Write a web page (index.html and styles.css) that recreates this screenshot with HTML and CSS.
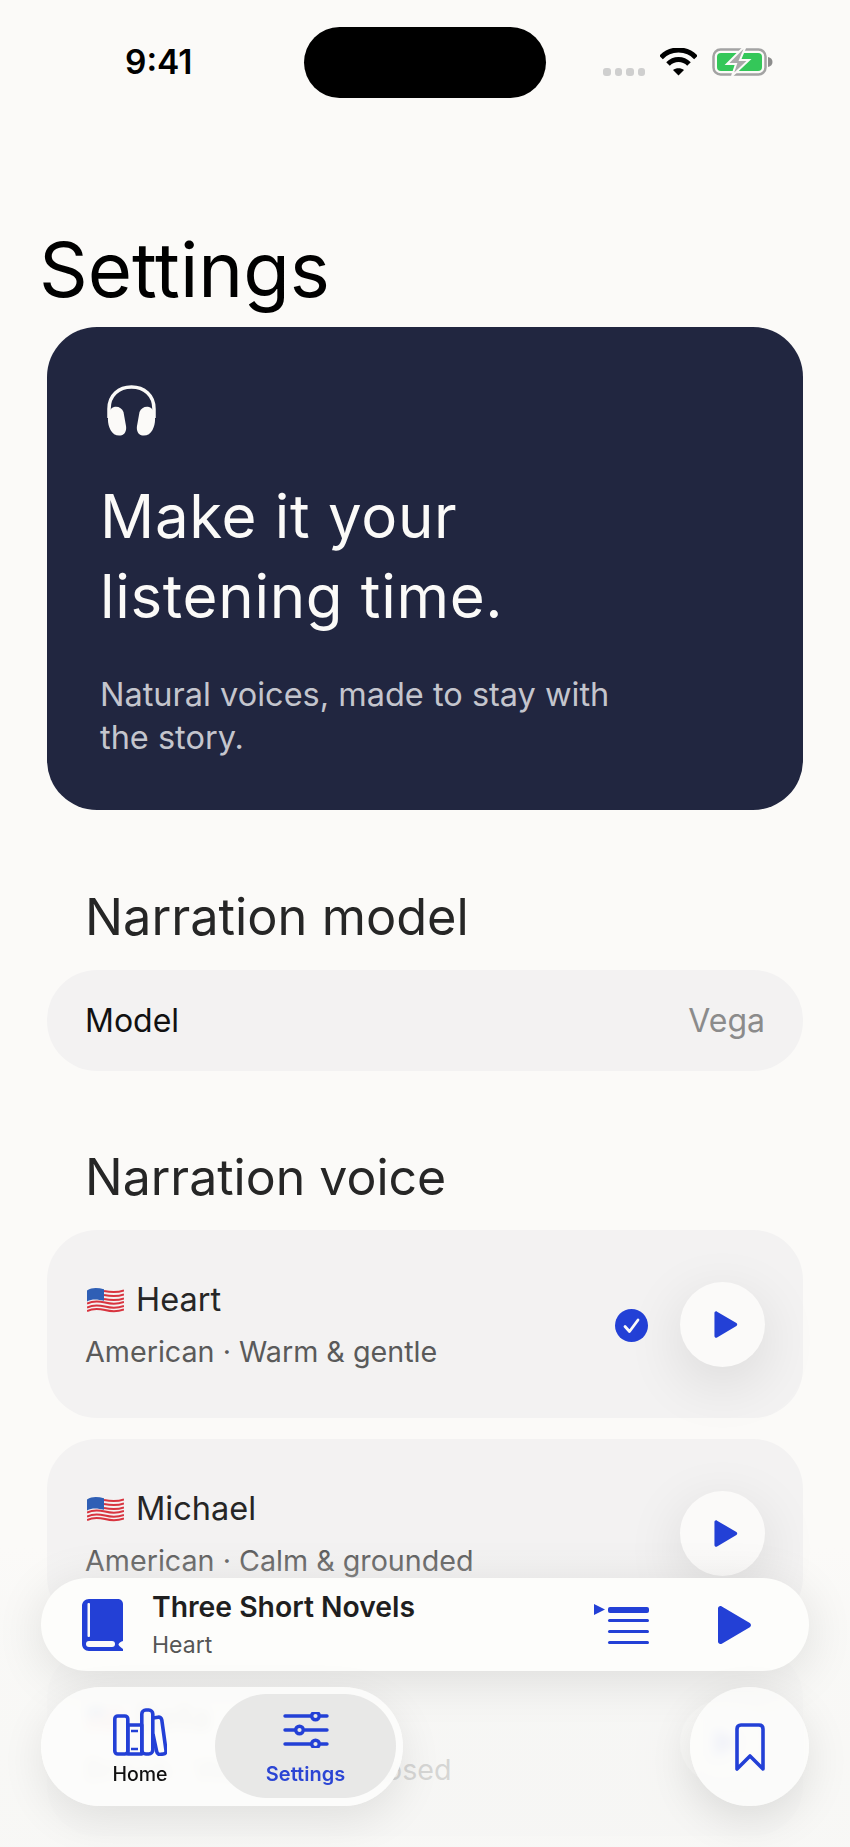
FILE: index.html
```html
<!DOCTYPE html>
<html lang="en">
<head>
<meta charset="utf-8">
<title>Settings</title>
<link rel="stylesheet" href="styles.css">
</head>
<body>
<svg class="defs" width="0" height="0" aria-hidden="true">
  <symbol id="flag" viewBox="0 0 37 26">
    <path d="M0 3.5C6-.5 12 1 18 2.5s13 1.500 19-.5v21c-6 2-13 2-19 .5S6 21 0 24.500z" fill="#f4f1f1"/>
    <g fill="none" stroke="#d8343f" stroke-width="2">
      <path d="M17 4c7 1.500 14 1.500 20-.5"/>
      <path d="M17 8c7 1.500 14 1.500 20-.5"/>
      <path d="M17 12c7 1.500 14 1.500 20-.5"/>
      <path d="M0 16.500c6-3 12-2.500 18-1s13 1.500 19-.5"/>
      <path d="M0 20.500c6-3 12-2.500 18-1s13 1.500 19-.5"/>
      <path d="M0 24c6-3 12-2.500 18-1s13 1.500 19-.5"/>
    </g>
    <path d="M0 3.500C5.500 0 11 .8 17 2.300v11.500C11 12.500 5.500 11.500 0 14.500z" fill="#2f5fb5"/>
  </symbol>
  <symbol id="play" viewBox="0 0 36 42">
    <path d="M2 4.500v33c0 2 2 3.200 3.800 2.200l28-16.500c1.600-1 1.600-3.300 0-4.300l-28-16.500C4 1.300 2 2.500 2 4.500z" fill="currentColor"/>
  </symbol>
</svg>

<main class="screen">
  <header class="status">
    <span class="time">9:41</span>
    <span class="island"></span>
    <span class="status-icons">
      <span class="dots"><i></i><i></i><i></i><i></i></span>
      <svg class="wifi" viewBox="0 0 37 28" aria-hidden="true">
        <path d="M1 9.500C10-.5 27-.5 36 9.500" fill="none" stroke="#000" stroke-width="5"/>
        <path d="M8 16c6-6 15-6 21 0" fill="none" stroke="#000" stroke-width="5"/>
        <path d="M13 22c3-2.500 8-2.500 11 0l-5.500 5.500z" fill="#000"/>
      </svg>
      <svg class="battery" viewBox="0 0 61 28" aria-hidden="true">
        <rect x="1.500" y="1.500" width="52" height="25" rx="7" fill="none" stroke="#a3a3a3" stroke-width="2.500"/>
        <rect x="5" y="5" width="45" height="18" rx="4" fill="#34c759"/>
        <path d="M56 9c3 .5 4.500 2.500 4.500 5s-1.500 4.500-4.500 5z" fill="#8c8c8c"/>
        <path d="M31 0L15 16h9l-4 12 17-16h-9l5-12z" fill="#a9a9a9" stroke="#fbfaf8" stroke-width="2"/>
      </svg>
    </span>
  </header>

  <h1 class="page-title">Settings</h1>

  <section class="hero">
    <svg class="hero-icon" viewBox="0 0 51 51" aria-hidden="true">
      <path d="M3 33V24C3 10 13 2 25.500 2S48 10 48 24v9" fill="none" stroke="#fbfaf8" stroke-width="3.500"/>
      <path d="M8 22c4-1 8 1 9.500 5l2.500 14c.8 5-1.500 9-5.500 9.500-4 .6-8-1.500-10-5.500C2 40 1 34 3 28c.8-3 2.500-5.500 5-6zM43 22c-4-1-8 1-9.500 5L31 41c-.8 5 1.500 9 5.500 9.500 4 .6 8-1.500 10-5.500 2.500-5 3.500-11 1.500-17-.8-3-2.500-5.500-5-6z" fill="#fbfaf8"/>
    </svg>
    <h2 class="hero-title">Make it your<br>listening time.</h2>
    <p class="hero-text">Natural voices, made to stay with<br>the story.</p>
  </section>

  <h2 class="section-title model-title">Narration model</h2>
  <div class="model-row">
    <span>Model</span>
    <span class="model-value">Vega</span>
  </div>

  <h2 class="section-title voice-title">Narration voice</h2>
  <div class="voices">
    <article class="voice">
      <div class="voice-info">
        <div class="voice-name"><svg class="flag"><use href="#flag"/></svg>Heart</div>
        <div class="voice-desc">American · Warm &amp; gentle</div>
      </div>
      <svg class="check" viewBox="0 0 33 33" aria-hidden="true">
        <circle cx="16.500" cy="16.500" r="16.500" fill="#2340d6"/>
        <path d="M10 17.500l4.500 5L23 11" fill="none" stroke="#fbfaf8" stroke-width="2.800" stroke-linecap="round" stroke-linejoin="round"/>
      </svg>
      <button class="round-play" aria-label="Play Heart"><svg class="play-s"><use href="#play"/></svg></button>
    </article>
    <article class="voice">
      <div class="voice-info">
        <div class="voice-name"><svg class="flag"><use href="#flag"/></svg>Michael</div>
        <div class="voice-desc">American · Calm &amp; grounded</div>
      </div>
      <button class="round-play" aria-label="Play Michael"><svg class="play-s"><use href="#play"/></svg></button>
    </article>
    <article class="voice">
      <div class="voice-info">
        <div class="voice-name"><svg class="flag"><use href="#flag"/></svg>Bella</div>
        <div class="voice-desc">British · Warm &amp; composed</div>
      </div>
      <button class="round-play" aria-label="Play Bella"><svg class="play-s"><use href="#play"/></svg></button>
    </article>
  </div>
</main>

<div class="fade"></div>

<div class="dock">
  <div class="player">
    <svg class="book" viewBox="0 0 41 52" aria-hidden="true">
      <path d="M7 0h29c2.800 0 5 2.200 5 5v37c-3 1-4.500 2.500-4.500 3.500s1.500 2 4.500 4.500v2H7c-4 0-7-3-7-7V7c0-4 3-7 7-7z" fill="#2340d6"/>
      <rect x="5.500" y="4" width="2.500" height="34" rx="1" fill="#fbfaf8"/>
      <rect x="4" y="42" width="29" height="6" rx="3" fill="#fbfaf8"/>
    </svg>
    <div class="player-text">
      <div class="player-title">Three Short Novels</div>
      <div class="player-sub">Heart</div>
    </div>
    <svg class="queue" viewBox="0 0 55 41" aria-hidden="true">
      <path d="M0 0l11 5.500L0 11z" fill="#2340d6"/>
      <rect x="14" y="3" width="41" height="6" rx="2" fill="#2340d6"/>
      <rect x="14" y="15" width="41" height="3" rx="1.500" fill="#2340d6"/>
      <rect x="14" y="26" width="41" height="3" rx="1.500" fill="#2340d6"/>
      <rect x="14" y="37" width="41" height="3" rx="1.500" fill="#2340d6"/>
    </svg>
    <svg class="play-l"><use href="#play"/></svg>
  </div>
  <div class="dock-row">
    <nav class="tabs">
      <a class="tab">
        <svg class="tab-icon" viewBox="0 0 54 48" aria-hidden="true">
          <g fill="none" stroke="#2340d6" stroke-width="3.600" stroke-linejoin="round">
            <rect x="1.800" y="8" width="13" height="38" rx="3"/>
            <rect x="14.800" y="17" width="14" height="29"/>
            <rect x="28.800" y="2" width="11" height="44" rx="4"/>
            <path d="M40 10l5-.8c2-.3 3.500.8 3.800 2.800l4.200 30.500c.3 2-.8 3.300-2.500 3.500l-3 .4c-2 .2-3.500-.8-3.800-2.800L40 26"/>
          </g>
          <path d="M18 23h7M18 41h7" stroke="#2340d6" stroke-width="2.500"/>
        </svg>
        <span class="tab-label">Home</span>
      </a>
      <a class="tab tab-active">
        <svg class="tab-icon" viewBox="0 0 46 36" aria-hidden="true">
          <g fill="none" stroke="#2340d6" stroke-width="3.400" stroke-linecap="round">
            <path d="M2 4h26M38 4h6M2 18h10M22 18h22M2 32h26M38 32h6"/>
            <circle cx="32.500" cy="4" r="3.800"/>
            <circle cx="16.500" cy="18" r="3.800"/>
            <circle cx="32.500" cy="32" r="3.800"/>
          </g>
        </svg>
        <span class="tab-label">Settings</span>
      </a>
    </nav>
    <button class="fab" aria-label="Bookmarks">
      <svg class="bookmark" viewBox="0 0 30 48" aria-hidden="true">
        <path d="M2 46V6c0-2.500 1.500-4 4-4h18c2.500 0 4 1.500 4 4v40L15 33z" fill="none" stroke="#2340d6" stroke-width="3.600" stroke-linejoin="round"/>
      </svg>
    </button>
  </div>
</div>
</body>
</html>
```
FILE: styles.css
```css
* { box-sizing: border-box; }
html, body { margin: 0; padding: 0; }
body {
  position: relative;
  width: 850px;
  height: 1847px;
  overflow: hidden;
  background: #fbfaf8;
  color: #1f1f1f;
  font-family: "Inter", "Liberation Sans", sans-serif;
}
.defs { position: absolute; }
.screen { display: flex; flex-direction: column; padding: 27px 47px 0; }

.status { display: flex; align-items: flex-start; height: 71px; }
.time {
  width: 257px;
  padding: 15px 0 0 78px;
  font-weight: 600;
  font-size: 33.500px;
  line-height: 40px;
  color: #000;
}
.island { width: 242px; height: 71px; border-radius: 36px; background: #000; }
.status-icons { display: flex; align-items: flex-start; padding: 21px 0 0 57px; }
.dots { display: flex; gap: 4px; margin-top: 20px; }
.dots i { width: 7.500px; height: 8px; border-radius: 3px; background: #cfcfcf; }
.wifi { width: 37px; height: 28px; margin-left: 15px; }
.battery { width: 61px; height: 28px; margin-left: 15px; }

.page-title {
  margin: 131px 0 0 -8px;
  font-weight: 400;
  font-size: 76px;
  line-height: 80px;
  letter-spacing: 0;
  color: #000;
}
.hero {
  margin-top: 18px;
  height: 483px;
  padding: 58px 53px 0;
  border-radius: 50px;
  background: #212640;
  color: #fbfaf8;
}
.hero-icon { display: block; width: 51px; height: 51px; margin-left: 6px; }
.hero-title {
  margin: 40px 0 0;
  font-weight: 400;
  font-size: 60px;
  line-height: 80px;
  letter-spacing: .7px;
}
.hero-text {
  margin: 37px 0 0;
  font-size: 32.500px;
  line-height: 43px;
  color: #c4c5cd;
}
.section-title {
  margin: 0 0 0 38px;
  font-weight: 400;
  font-size: 50.500px;
  line-height: 60px;
  color: #262626;
}
.model-title { margin-top: 77px; }
.voice-title { margin-top: 76px; font-size: 50px; }
.model-row {
  display: flex;
  justify-content: space-between;
  align-items: center;
  margin-top: 23px;
  height: 101px;
  padding: 0 38px;
  border-radius: 50px;
  background: #f3f2f2;
  font-size: 32px;
  color: #111;
}
.model-value { color: #8b8b8b; }
.voices { display: flex; flex-direction: column; gap: 21px; margin-top: 23px; }
.voice {
  display: flex;
  align-items: center;
  height: 188px;
  padding: 0 38px;
  border-radius: 50px;
  background: #f3f2f2;
}
.voice-info { flex: 1; padding-top: 4px; }
.voice-name {
  display: flex;
  align-items: center;
  gap: 12px;
  padding-left: 2px;
  font-size: 32.500px;
  line-height: 44px;
  color: #262626;
}
.flag { width: 37px; height: 26px; }
.voice-desc { margin-top: 8px; font-size: 28.700px; line-height: 44px; color: #5a5a5a; }
.check { width: 33px; height: 33px; margin-right: 32px; margin-top: 2px; }
.round-play {
  display: flex;
  align-items: center;
  justify-content: center;
  width: 85px;
  height: 85px;
  padding: 0 0 0 6px;
  border: 0;
  border-radius: 50%;
  background: #fbfaf9;
  color: #2340d6;
  box-shadow: 0 16px 60px rgba(0, 0, 0, .11);
}
.play-s { width: 25px; height: 29px; }

.fade {
  position: absolute;
  left: 0;
  right: 0;
  bottom: 0;
  height: 300px;
  background: linear-gradient(to bottom, rgba(250, 250, 248, 0), rgba(248, 248, 246, .72) 28%, rgba(247, 247, 245, .82));
}
.dock {
  position: absolute;
  left: 41px;
  top: 1578px;
  width: 768px;
  display: flex;
  flex-direction: column;
  gap: 16px;
}
.player {
  display: flex;
  align-items: center;
  height: 93px;
  padding: 0 57px 0 41px;
  border-radius: 47px;
  background: #fdfdfb;
  box-shadow: 0 8px 50px rgba(0, 0, 0, .11);
}
.book { width: 41px; height: 52px; }
.player-text { flex: 1; margin-left: 29px; }
.player-title { font-weight: 600; font-size: 28.300px; line-height: 34px; color: #1f1f1f; }
.player-sub { margin-top: 6px; font-size: 23px; line-height: 30px; color: #555; }
.queue { width: 55px; height: 41px; margin-right: 67px; }
.play-l { width: 36px; height: 42px; color: #2340d6; }
.dock-row { display: flex; justify-content: space-between; }
.tabs {
  display: flex;
  align-items: stretch;
  justify-content: space-between;
  width: 362px;
  height: 119px;
  padding: 7px 7px 8px 0;
  border-radius: 60px;
  background: rgba(253, 253, 251, .85);
  backdrop-filter: blur(5px);
  box-shadow: 0 14px 44px rgba(0, 0, 0, .09);
}
.tab {
  display: flex;
  flex-direction: column;
  align-items: center;
  width: 174px;
  padding-top: 14px;
  padding-left: 24px;
}
.tab-active {
  width: 181px;
  padding-top: 18px;
  padding-left: 0;
  border-radius: 52px;
  background: #e8e8e7;
}
.tab-icon { width: 54px; height: 48px; flex: none; }
.tab-active .tab-icon { width: 46px; height: 36px; }
.tab-label {
  margin-top: 6px;
  font-weight: 500;
  font-size: 19.500px;
  line-height: 24px;
  color: #111;
}
.tab-active .tab-label { margin-top: 14px; font-size: 20px; font-weight: 600; color: #2b45d4; }
.fab {
  display: flex;
  align-items: center;
  justify-content: center;
  width: 119px;
  height: 119px;
  padding: 0;
  border: 0;
  border-radius: 50%;
  background: rgba(252, 252, 251, .78);
  backdrop-filter: blur(6px);
  box-shadow: 0 14px 44px rgba(0, 0, 0, .1);
}
.bookmark { width: 30px; height: 48px; }
```
